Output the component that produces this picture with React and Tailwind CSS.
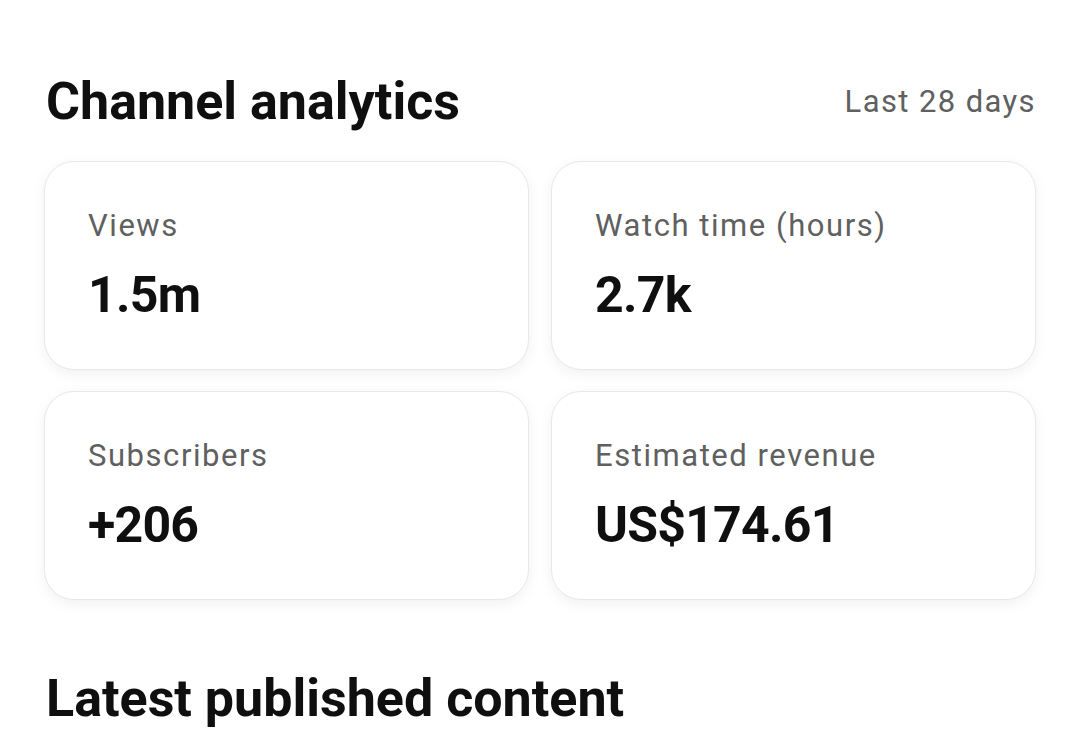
import React from "react";

const stats = [
  { label: "Views", value: "1.5m" },
  { label: "Watch time (hours)", value: "2.7k" },
  { label: "Subscribers", value: "+206" },
  { label: "Estimated revenue", value: "US$174.61" },
];

const StatCard = ({ label, value }) => (
  <div className="h-[209px] rounded-[30px] border border-[#e8e8e8] bg-white px-[43px] pt-[44px] shadow-[0_4px_14px_rgba(0,0,0,0.06)]">
    <div className="text-[31px] leading-[40px] tracking-[0.05em] text-[#606060]">{label}</div>
    <div className="mt-[21px] text-[50px] leading-[56px] font-bold tracking-[-0.015em] text-[#0f0f0f]">{value}</div>
  </div>
);

export default function App() {
  return (
    <div className="min-h-screen w-[1080px] overflow-hidden bg-white px-[44px] pt-[72px] font-['Roboto',sans-serif]">
      {/* Header */}
      <div className="flex items-center justify-between">
        <h1 className="pl-[2px] text-[52px] leading-[60px] font-bold text-[#0f0f0f]">Channel analytics</h1>
        <span className="text-[31px] tracking-[0.045em] text-[#606060]">Last 28 days</span>
      </div>

      {/* Stats grid */}
      <div className="mt-[29px] grid grid-cols-2 gap-x-[22px] gap-y-[21px]">
        {stats.map((s) => (
          <StatCard key={s.label} {...s} />
        ))}
      </div>

      <h2 className="mt-[69px] pl-[2px] text-[52px] leading-[60px] font-bold text-[#0f0f0f]">Latest published content</h2>
    </div>
  );
}
